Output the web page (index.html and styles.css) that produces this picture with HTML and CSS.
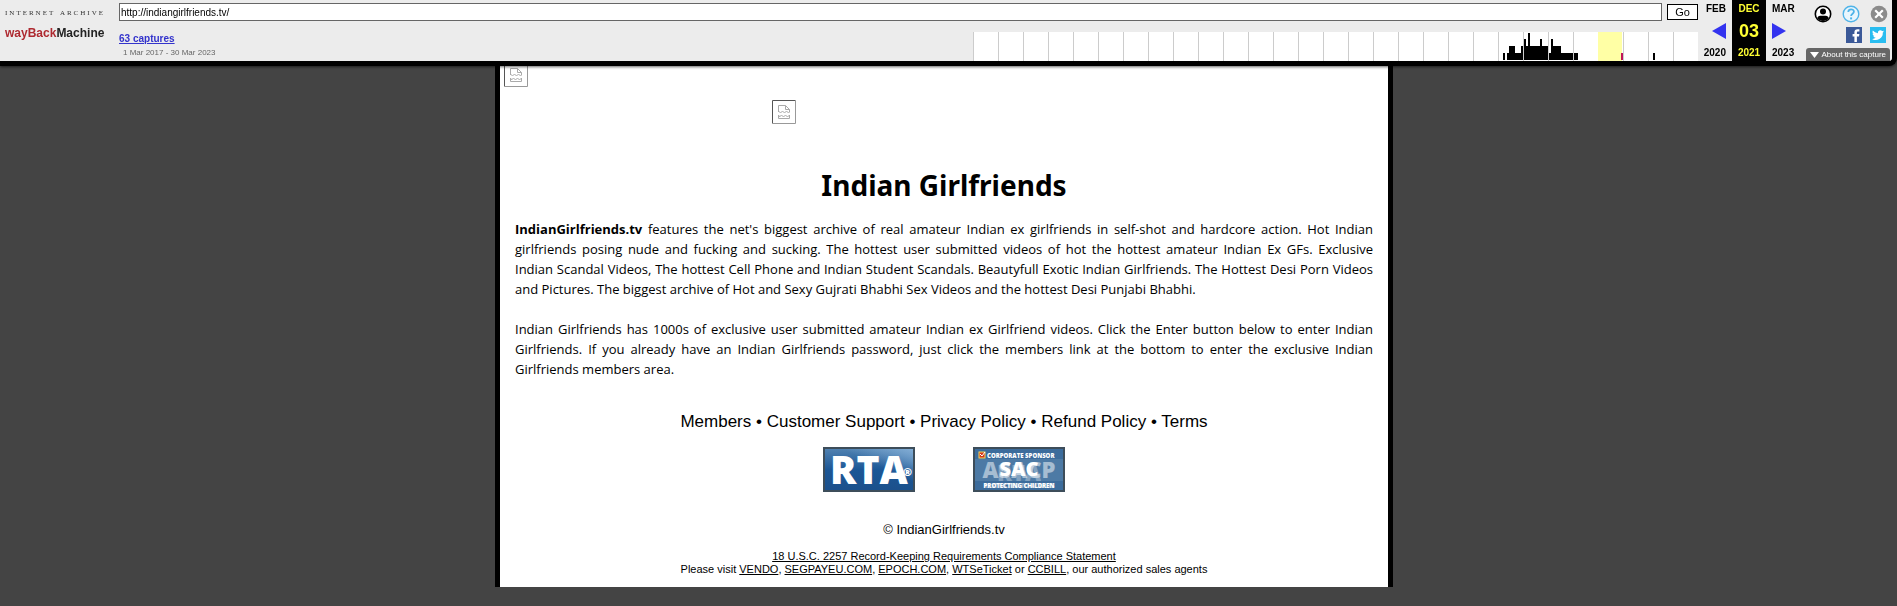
FILE: index.html
```html
<!DOCTYPE html>
<html lang="en">

<head>
    <meta charset="UTF-8">
    <meta name="viewport" content="width=device-width, initial-scale=1.0">
    <title>Indian Girlfriends</title>
    <link rel="stylesheet" href="styles.css">
</head>

<body>
    <!-- Archive toolbar -->
    <header class="toolbar">
        <a href="#" class="logo" aria-label="Internet Archive Wayback Machine">
            <span class="logo-top"><span>INTERNET</span> <span>ARCHIVE</span></span>
            <span class="logo-name"><span class="red">wayBack</span>Machine</span>
        </a>

        <div class="main">
            <form class="url-form">
                <input type="text" class="url" value="http://indiangirlfriends.tv/" aria-label="URL">
                <button type="button" class="go">Go</button>
            </form>
            <div class="captures-row">
                <div class="captures">
                    <a href="#">63 captures</a>
                    <div class="range">1 Mar 2017 - 30 Mar 2023</div>
                </div>
                <svg class="sparkline" width="725" height="29" viewBox="0 0 725 29" shape-rendering="crispEdges">
                    <defs>
                        <pattern id="year" width="25" height="29" patternUnits="userSpaceOnUse">
                            <rect width="25" height="29" fill="#fff" />
                            <rect width="1" height="29" fill="#ccc" />
                        </pattern>
                    </defs>
                    <rect width="725" height="29" fill="url(#year)" />
                    <rect x="625" width="24" height="29" fill="#ffffa5" />
                    <path d="M530 28v-7h2v7zM534 28v-7h2v-7h6v7h6v-7h2v14zM551 28v-21h2v7h2v-13h2v13h10v-7h2v7h6v14zM576 28v-7h2v-14h2v7h8v7h12v7zM601 28v-7h4v7zM680 28v-7h2v7z" fill="#000" />
                    <rect x="648" y="21" width="2" height="7" fill="#c0145a" />
                </svg>
            </div>
        </div>

        <nav class="dates">
            <a href="#" class="date prev">
                <span>FEB</span>
                <svg width="14" height="16" viewBox="0 0 14 16"><path d="M14 0v16L0 8z" fill="#3333ef" /></svg>
                <span>2020</span>
            </a>
            <div class="date current">
                <span>DEC</span>
                <strong>03</strong>
                <span>2021</span>
            </div>
            <a href="#" class="date next">
                <span>MAR</span>
                <svg width="14" height="16" viewBox="0 0 14 16"><path d="M0 0v16l14-8z" fill="#3333ef" /></svg>
                <span>2023</span>
            </a>
        </nav>

        <div class="tools">
            <div class="icons">
                <a href="#" aria-label="Log in">
                    <svg width="18" height="18" viewBox="0 0 18 18">
                        <circle cx="9" cy="9" r="7.7" fill="#fff" stroke="#000" stroke-width="1.6" />
                        <circle cx="9" cy="6.6" r="3" />
                        <path d="M3.2 13c1-2.4 3-2.2 5.8-2.2s4.8-.2 5.8 2.2C13.5 15 11.5 16 9 16s-4.5-1-5.8-3z" />
                    </svg>
                </a>
                <a href="#" aria-label="Help">
                    <svg width="18" height="18" viewBox="0 0 18 18" fill="none" stroke="#4fb3e8">
                        <circle cx="9" cy="9" r="7.8" fill="#e8f6fd" stroke-width="1.4" />
                        <path d="M6.3 7c0-3.5 5.6-3.5 5.6-.3 0 1.9-2.8 2.1-2.8 4.3" stroke-width="1.8" />
                        <path d="M9.1 12.4v2" stroke-width="2" />
                    </svg>
                </a>
                <a href="#" aria-label="Close">
                    <svg width="18" height="18" viewBox="0 0 18 18">
                        <circle cx="9" cy="9" r="8.3" fill="#8b8b8b" />
                        <path d="M5.2 5.2l7.6 7.6M12.8 5.2l-7.6 7.6" stroke="#fff" stroke-width="2.2" />
                    </svg>
                </a>
            </div>
            <div class="icons social">
                <a href="#" aria-label="Facebook">
                    <svg width="16" height="16" viewBox="0 0 16 16">
                        <rect width="16" height="16" fill="#3b5998" />
                        <path d="M8.4 15V9.4H6.6V7h1.8V5.3C8.4 3.2 9.6 2.2 11.5 2.2h1.9v2.3h-1.3c-.9 0-1.2.4-1.2 1.2V7h2.5l-.4 2.4h-2.1V15z" fill="#fff" />
                    </svg>
                </a>
                <a href="#" aria-label="Twitter">
                    <svg width="16" height="16" viewBox="0 0 16 16">
                        <rect width="16" height="16" fill="#29bdf0" />
                        <path d="M14 4.3c-.5.2-.9.3-1.4.4.5-.3.9-.8 1.1-1.3-.5.3-1 .5-1.6.6a2.5 2.5 0 0 0-4.2 2.2A7 7 0 0 1 2.8 3.6a2.5 2.5 0 0 0 .8 3.3c-.4 0-.8-.1-1.1-.3 0 1.2.8 2.2 2 2.5-.4.1-.7.1-1.1 0 .3 1 1.2 1.7 2.3 1.7A5 5 0 0 1 2 11.9a7 7 0 0 0 10.8-6.3c.5-.4.9-.8 1.2-1.3z" fill="#fff" />
                    </svg>
                </a>
            </div>
            <button type="button" class="about">
                <svg width="9" height="6" viewBox="0 0 9 6"><path d="M0 0h9L4.5 6z" fill="#fff" /></svg>
                About this capture
            </button>
        </div>
    </header>

    <!-- Archived page -->
    <main class="container">
        <svg class="broken" width="24" height="24" viewBox="0 0 24 24" fill="none">
            <path d="M.5 23.5V.5h23" stroke="#555" />
            <path d="M23.5.5v23H.5" stroke="#999" />
            <path d="M6.5 12V5.5h7l4 4V12M13.5 5.5v4h4M6.5 11l2 2 2-2 2 2 2-2 2 2 1-1M6.5 15v3.5h11V15l-2 2-2-2-2 2-2-2-2 2z" stroke="#aaa" />
        </svg>
        <div class="banner">
            <svg class="broken" width="24" height="24" viewBox="0 0 24 24" fill="none">
                <path d="M.5 23.5V.5h23" stroke="#555" />
                <path d="M23.5.5v23H.5" stroke="#999" />
                <path d="M6.5 12V5.5h7l4 4V12M13.5 5.5v4h4M6.5 11l2 2 2-2 2 2 2-2 2 2 1-1M6.5 15v3.5h11V15l-2 2-2-2-2 2-2-2-2 2z" stroke="#aaa" />
            </svg>
        </div>

        <h1>Indian Girlfriends</h1>
        <p><strong>IndianGirlfriends.tv</strong> features the net's biggest archive of real amateur Indian ex girlfriends in self-shot and hardcore action. Hot Indian girlfriends posing nude and fucking and sucking. The hottest user submitted videos of hot the hottest amateur Indian Ex GFs. Exclusive Indian&nbsp;Scandal Videos, The hottest Cell Phone and Indian Student Scandals. Beautyfull Exotic Indian Girlfriends. The Hottest Desi Porn Videos and&nbsp;Pictures. The biggest archive of Hot and Sexy Gujrati Bhabhi Sex Videos and the hottest Desi Punjabi Bhabhi.</p>
        <p>Indian Girlfriends has 1000s of exclusive user submitted amateur Indian ex Girlfriend videos. Click the Enter button below to enter Indian Girlfriends. If you already have an Indian Girlfriends password, just click the members link at the bottom to enter the exclusive Indian Girlfriends members area.</p>

        <nav class="links">
            <a href="#">Members</a> &bull; <a href="#">Customer Support</a> &bull; <a href="#">Privacy Policy</a> &bull; <a href="#">Refund Policy</a> &bull; <a href="#">Terms</a>
        </nav>

        <div class="badges">
            <a href="#" aria-label="RTA">
                <svg width="92" height="45" viewBox="0 0 92 45">
                    <defs>
                        <linearGradient id="blue" x1="0" y1="0" x2="0" y2="1">
                            <stop offset="0" stop-color="#5283b2" />
                            <stop offset="0.5" stop-color="#1c5796" />
                            <stop offset="1" stop-color="#1b508b" />
                        </linearGradient>
                        <linearGradient id="shine" x1="0" y1="1" x2="1" y2="0">
                            <stop offset="0.6" stop-color="#8fb8de" stop-opacity="0" />
                            <stop offset="1" stop-color="#8fb8de" stop-opacity="0.8" />
                        </linearGradient>
                    </defs>
                    <rect x="1" y="1" width="90" height="43" fill="url(#blue)" stroke="#3d4d5a" stroke-width="2" />
                    <rect x="2" y="2" width="88" height="41" fill="url(#shine)" />
                    <text x="7" y="37" class="rta">RTA</text>
                    <text x="80" y="29" class="reg">&reg;</text>
                </svg>
            </a>
            <a href="#" aria-label="ASACP corporate sponsor">
                <svg width="92" height="45" viewBox="0 0 92 45">
                    <rect x="1" y="1" width="90" height="43" fill="#3c6c9c" stroke="#3d4d5a" stroke-width="2" />
                    <rect x="2" y="12" width="88" height="22" fill="#4d7aa5" />
                    <rect x="6" y="5" width="6" height="6" fill="#d33a1c" stroke="#f6d75a" />
                    <path d="M7 7l2 2 3-4" stroke="#fff" fill="none" />
                    <text x="14" y="11" class="sponsor">CORPORATE SPONSOR</text>
                    <text x="46" y="31" class="asacp faded">ASACP</text>
                    <text x="46" y="34" class="asacp rta-faded">RTA</text>
                    <text x="46" y="29" class="sac">SAC</text>
                    <text x="46" y="41" class="protect faded">RESTRICTED TO ADULTS</text>
                    <text x="46" y="41" class="protect">PROTECTING CHILDREN</text>
                </svg>
            </a>
        </div>

        <footer>
            <div class="copyright">&copy; IndianGirlfriends.tv</div>
            <div class="legal">
                <a href="#">18 U.S.C. 2257 Record-Keeping Requirements Compliance Statement</a><br>
                Please visit <a href="#">VENDO</a>, <a href="#">SEGPAYEU.COM</a>, <a href="#">EPOCH.COM</a>, <a href="#">WTSeTicket</a> or <a href="#">CCBILL</a>, our authorized sales agents
            </div>
        </footer>
    </main>
</body>

</html>
```
FILE: styles.css
```css
* {
    box-sizing: border-box;
}

body {
    margin: 0;
    padding: 61px 9px 18px 0;
    background-color: #444;
    color: #000;
    font-family: "Liberation Sans", Arial, sans-serif;
}

a {
    color: inherit;
}

svg {
    display: block;
}

/* Archive toolbar */
.toolbar {
    position: fixed;
    top: 0;
    left: 0;
    right: 0;
    height: 66px;
    display: flex;
    padding-left: 5px;
    background-color: #ececec;
    border-bottom: 5px solid #000;
    border-right: 5px solid #000;
    border-bottom-right-radius: 8px;
    box-shadow: 0 1px 3px rgba(0, 0, 0, 0.6);
}

.logo {
    width: 114px;
    padding-top: 8px;
    text-decoration: none;
}

.logo-top {
    display: flex;
    justify-content: space-between;
    width: 100px;
    font: 7px/10px "Liberation Serif", serif;
    letter-spacing: 2px;
    color: #333;
}

.logo-name {
    display: block;
    font: bold 12px/30px "Liberation Sans", Arial, sans-serif;
    color: #222;
}

.logo-name .red {
    color: #ae2a31;
}

.main {
    flex: 1;
    padding-top: 3px;
}

.url-form {
    display: flex;
    align-items: center;
    gap: 5px;
}

.url {
    flex: 1;
    height: 18px;
    padding: 0 1px;
    border: 1px solid #666;
    background-color: #fff;
    font: 10px "Liberation Sans", Arial, sans-serif;
}

.go {
    width: 31px;
    height: 16px;
    padding: 0;
    border: 1px solid #000;
    background-color: #fff;
    font: 11px "Liberation Sans", Arial, sans-serif;
}

.captures-row {
    display: flex;
    justify-content: space-between;
    padding-top: 11px;
}

.captures a {
    display: block;
    color: #33c;
    font-size: 10px;
    line-height: 13px;
    font-weight: bold;
}

.range {
    padding: 2px 0 0 4px;
    font-size: 8px;
    line-height: 12px;
    color: #666;
}

.dates {
    display: flex;
    font: bold 10px/14px "Liberation Sans", Arial, sans-serif;
}

.date {
    width: 34px;
    padding: 2px 0 1px;
    display: flex;
    flex-direction: column;
    justify-content: space-between;
    text-decoration: none;
}

.prev {
    align-items: flex-end;
    padding-right: 6px;
}

.current {
    align-items: center;
    background-color: #000;
    color: #ff3;
}

.current strong {
    font-size: 18px;
}

.next {
    padding-left: 6px;
}

.tools {
    width: 92px;
    padding: 5px 2px 0 0;
    display: flex;
    flex-direction: column;
    align-items: flex-end;
}

.icons {
    display: flex;
    gap: 10px;
    padding-right: 2px;
}

.social {
    gap: 8px;
    padding: 4px 4px 0 0;
}

.about {
    display: flex;
    align-items: center;
    gap: 3px;
    margin-top: 5px;
    height: 13px;
    padding: 0 4px;
    border: 0;
    border-radius: 3px 3px 0 0;
    background-color: #666;
    color: #fff;
    font: 8px "Liberation Sans", Arial, sans-serif;
}

/* Archived page */
.container {
    max-width: 898px;
    margin: 0 auto;
    padding: 2px 15px 11px;
    background-color: #fff;
    border: 5px solid #000;
    border-width: 0 5px;
}

.container > .broken {
    margin-left: -11px;
}

.banner {
    padding: 13px 0 44px 30%;
}

h1 {
    margin: 0 0 17px;
    text-align: center;
    font: bold 28px/34px "Noto Sans", sans-serif;
}

p {
    margin: 0 0 20px;
    text-align: justify;
    font: 13px/20px "Open Sans", sans-serif;
}

.links {
    padding-top: 13px;
    text-align: center;
    font-size: 17px;
    line-height: 20px;
}

.links a {
    text-decoration: none;
}

.badges {
    display: flex;
    justify-content: center;
    gap: 58px;
    padding-top: 15px;
}

.badges text {
    font-family: "Open Sans", sans-serif;
    font-weight: 800;
    fill: #fff;
}

.badges .rta {
    font-size: 39px;
}

.badges .reg {
    font-size: 11px;
}

.badges .sponsor {
    font-size: 6px;
}

.badges .asacp,
.badges .sac,
.badges .protect {
    font-size: 22px;
    text-anchor: middle;
}

.badges .sac {
    font-size: 20px;
}

.badges .protect {
    font-size: 6px;
}

.badges .faded {
    opacity: 0.5;
}

.badges .rta-faded {
    opacity: 0.3;
}

footer {
    padding-top: 30px;
    text-align: center;
}

.copyright {
    font-size: 13px;
    line-height: 16px;
}

.legal {
    padding-top: 12px;
    font-size: 11px;
    line-height: 13px;
}
```
